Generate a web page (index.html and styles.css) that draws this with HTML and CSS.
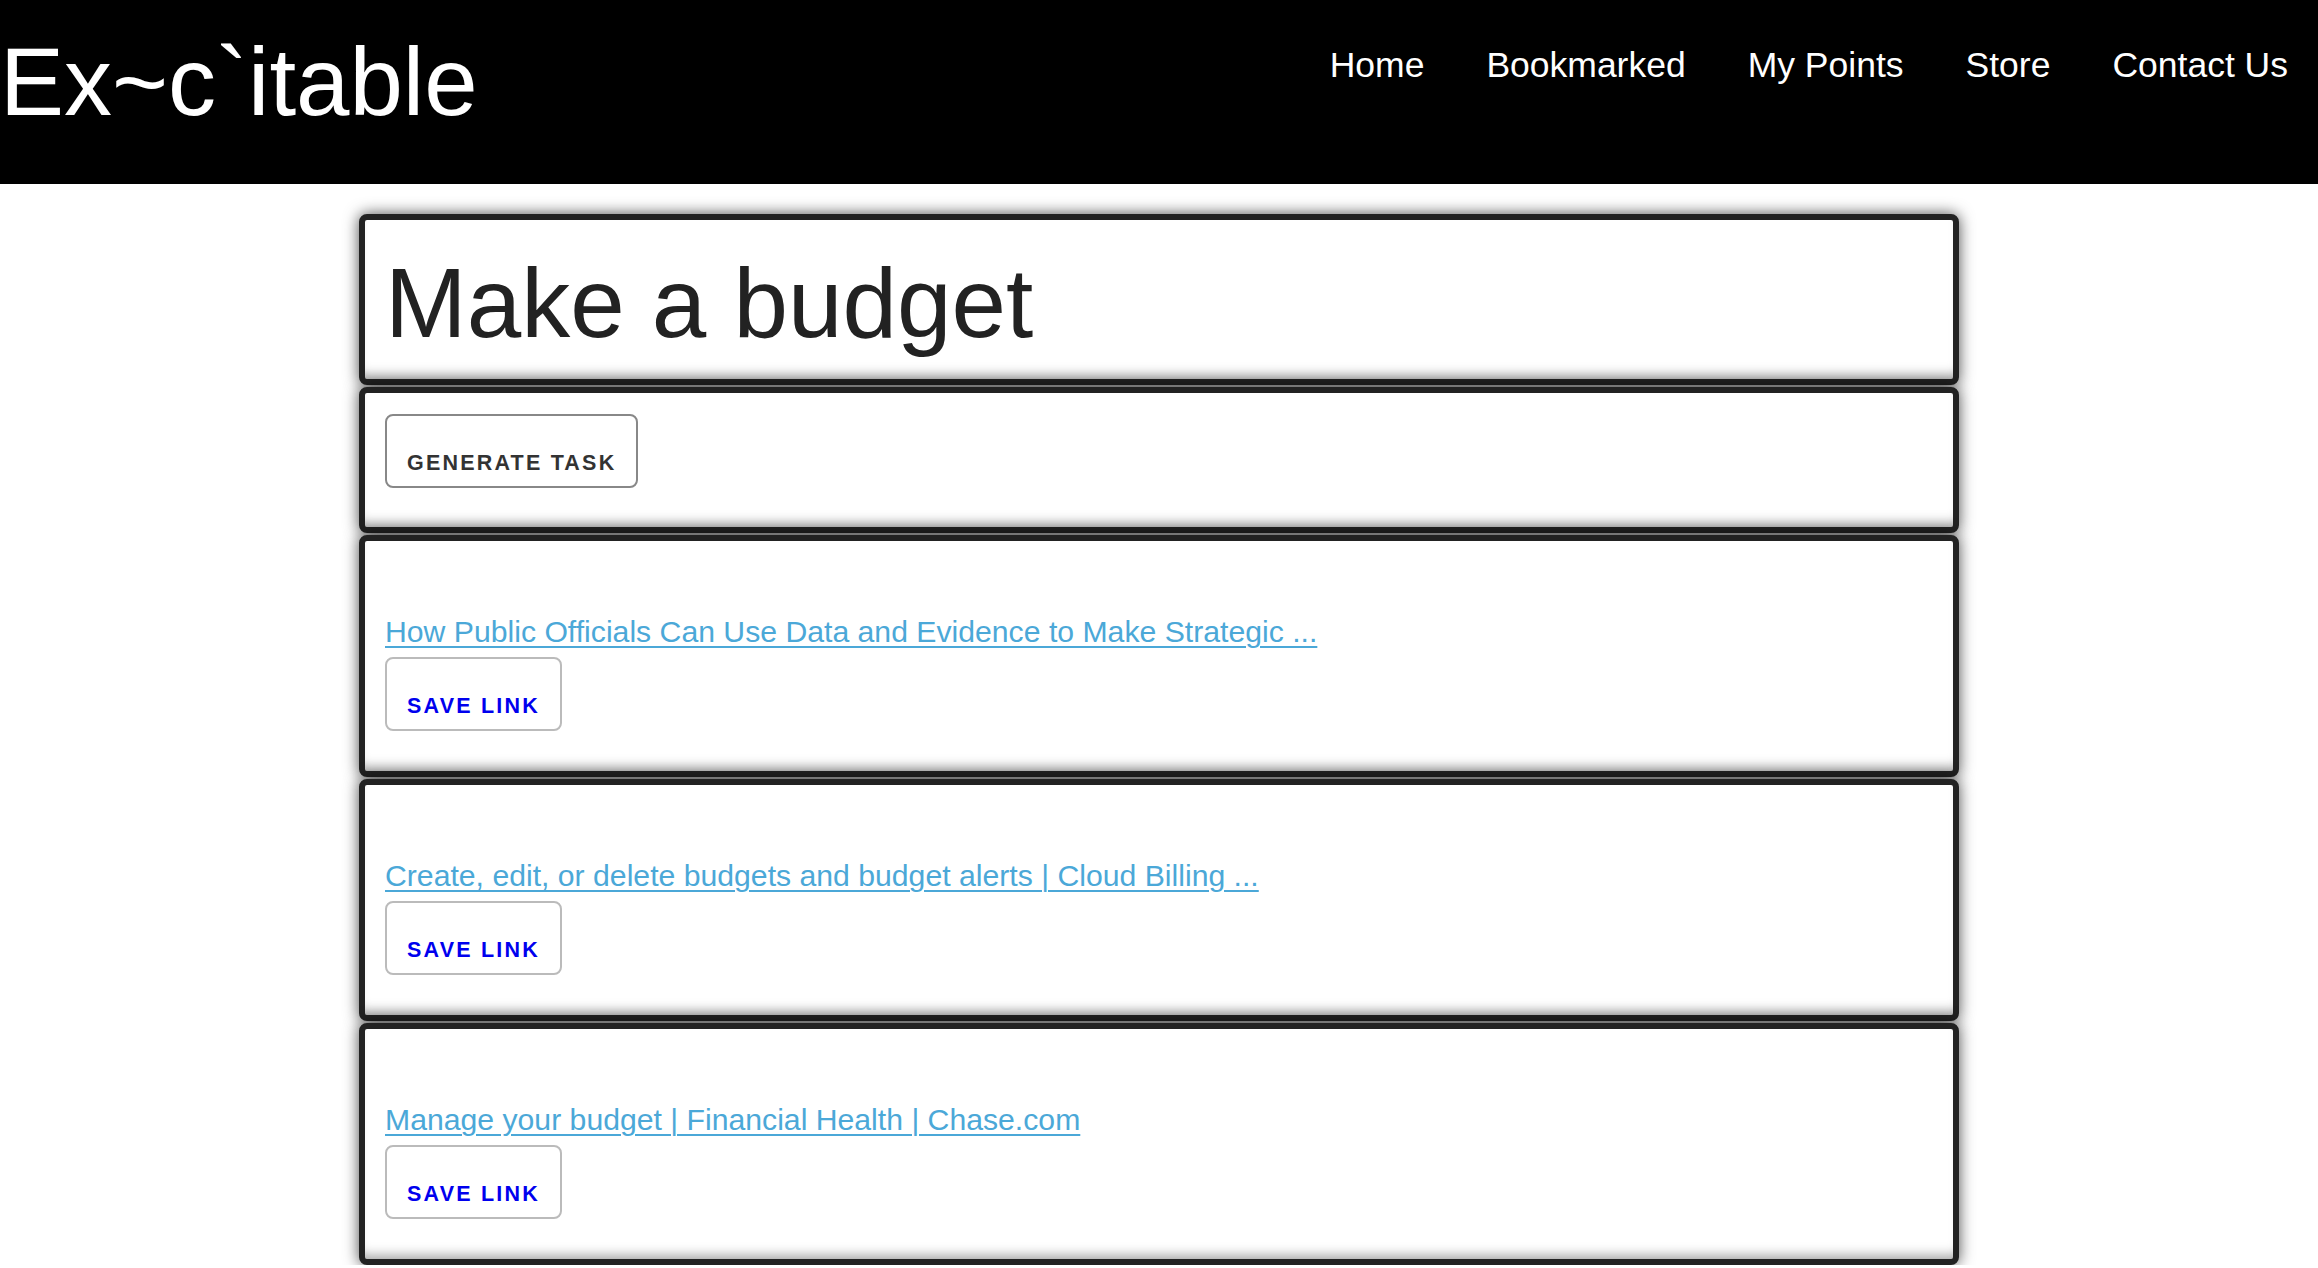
FILE: index.html
```html
<!DOCTYPE html>
<html lang="en">
<head>
<meta charset="utf-8">
<title>Ex~c`itable</title>
<link rel="stylesheet" href="styles.css">
</head>
<body>
<header class="topbar">
  <div class="logo">Ex~c`itable</div>
  <nav class="nav">
    <a href="#">Home</a>
    <a href="#">Bookmarked</a>
    <a href="#">My Points</a>
    <a href="#">Store</a>
    <a href="#">Contact Us</a>
  </nav>
</header>
<main class="cards">
  <section class="card card-title">
    <h1>Make a budget</h1>
  </section>
  <section class="card card-action">
    <button class="btn btn-dark">Generate Task</button>
  </section>
  <section class="card card-link">
    <a class="result" href="#">How Public Officials Can Use Data and Evidence to Make Strategic ...</a>
    <button class="btn btn-save"><a href="#">Save Link</a></button>
  </section>
  <section class="card card-link">
    <a class="result" href="#">Create, edit, or delete budgets and budget alerts | Cloud Billing ...</a>
    <button class="btn btn-save"><a href="#">Save Link</a></button>
  </section>
  <section class="card card-link">
    <a class="result" href="#">Manage your budget | Financial Health | Chase.com</a>
    <button class="btn btn-save"><a href="#">Save Link</a></button>
  </section>
</main>
</body>
</html>
```

FILE: styles.css
```css
* { box-sizing: border-box; }
html, body { margin: 0; padding: 0; background: #fff; }
body { font-family: "Liberation Sans", Arial, Helvetica, sans-serif; color: #222; }

.topbar {
  background: #000;
  height: 184px;
  display: flex;
  justify-content: space-between;
  align-items: flex-start;
}
.logo {
  color: #fff;
  font-size: 96px;
  line-height: 1;
  padding-top: 34px;
  padding-left: 0;
}
.nav {
  display: flex;
  gap: 62px;
  padding-top: 48px;
  padding-right: 30px;
}
.nav a {
  color: #fff;
  text-decoration: none;
  font-size: 35.5px;
  line-height: 1;
}

.cards {
  width: 1600px;
  margin: 30px auto 0;
  display: flex;
  flex-direction: column;
  gap: 2px;
}
.card {
  background: #fff;
  border: 6px solid #222;
  border-radius: 8px;
  box-shadow: 0 0 15px rgba(0,0,0,0.7), inset 0 -12px 12px -8px rgba(0,0,0,0.35);
  padding: 0 20px;
}
.card-title { height: 171px; padding-top: 34px; }
.card-title h1 {
  margin: 0;
  font-weight: normal;
  font-size: 98px;
  line-height: 1;
  color: #222;
}
.card-action { padding-top: 21px; padding-bottom: 39px; }
.card-link { padding-top: 73px; padding-bottom: 40px; display: flex; flex-direction: column; align-items: flex-start; }

.result {
  display: block;
  color: #4ba8d8;
  font-size: 30.2px;
  line-height: 36px;
  text-decoration: underline;
  text-decoration-thickness: 2px;
  text-underline-offset: 4px;
  margin-bottom: 7px;
}

.btn {
  display: block;
  height: 74px;
  padding: 37px 20px 12px;
  background: #fff;
  border: 2px solid #bbb;
  border-radius: 8px;
  font-family: "Liberation Sans", Arial, Helvetica, sans-serif;
  font-weight: bold;
  font-size: 21.5px;
  line-height: 21px;
  letter-spacing: 2.2px;
  text-transform: uppercase;
  color: #333;
}
.btn-dark { border-color: #888; }
.btn-save a { color: #0000ee; text-decoration: none; }
```
